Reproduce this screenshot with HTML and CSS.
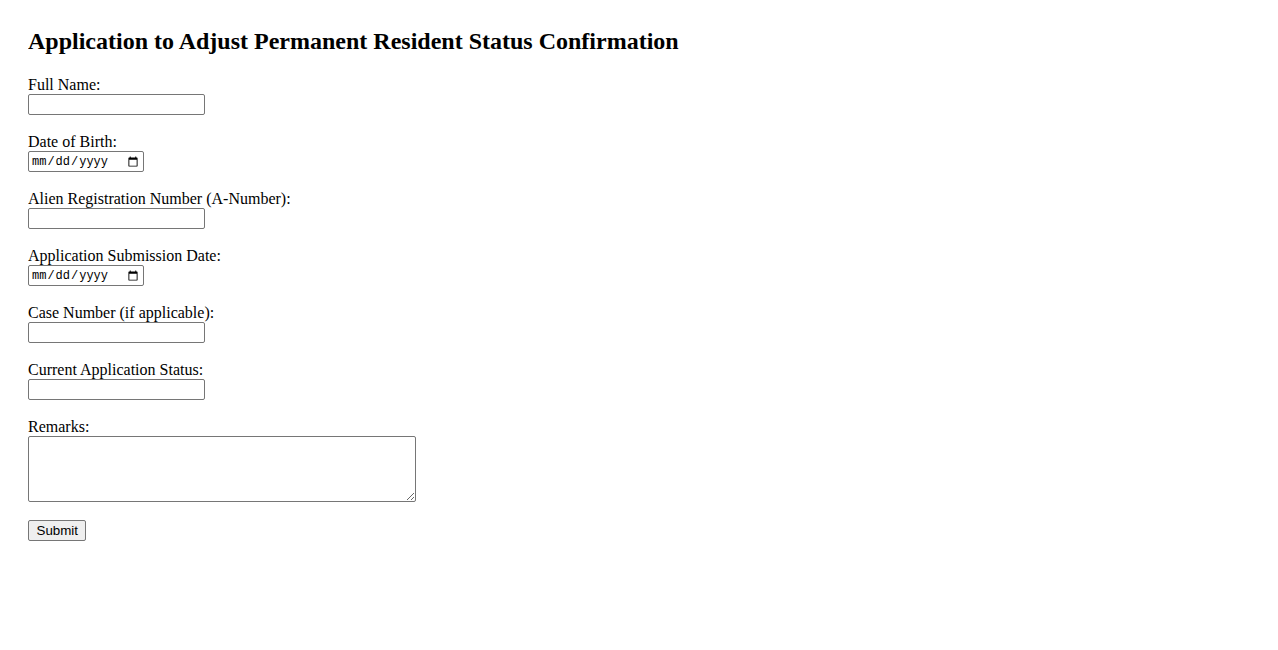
FILE: index.html
```html
<!DOCTYPE html>
<html lang="en">
<head>
    <meta charset="UTF-8">
    <meta name="viewport" content="width=device-width, initial-scale=1.0">
    <title>Application to Adjust Permanent Resident Status Confirmation</title>
    <link rel="stylesheet" href="styles.css">
</head>
<body>
<h2>Application to Adjust Permanent Resident Status Confirmation</h2>
<form class="status-form">
    <div class="form-group">
        <label for="fullName">Full Name:</label>
        <input type="text" id="fullName" name="fullName">
    </div>
    <div class="form-group">
        <label for="dob">Date of Birth:</label>
        <input type="date" id="dob" name="dob">
    </div>
    <div class="form-group">
        <label for="aNumber">Alien Registration Number (A-Number):</label>
        <input type="text" id="aNumber" name="aNumber">
    </div>
    <div class="form-group">
        <label for="submissionDate">Application Submission Date:</label>
        <input type="date" id="submissionDate" name="submissionDate">
    </div>
    <div class="form-group">
        <label for="caseNumber">Case Number (if applicable):</label>
        <input type="text" id="caseNumber" name="caseNumber">
    </div>
    <div class="form-group">
        <label for="status">Current Application Status:</label>
        <input type="text" id="status" name="status">
    </div>
    <div class="form-group">
        <label for="remarks">Remarks:</label>
        <textarea id="remarks" name="remarks" rows="4" cols="50"></textarea>
    </div>
    <button type="submit">Submit</button>
</form>
</body>
</html>
```

FILE: styles.css
```css
body {
    font-family: "Liberation Serif", "Times New Roman", serif;
    font-size: 16px;
    color: #000;
    background: #fff;
    margin: 28px;
}
h2 {
    font-size: 24px;
    font-weight: bold;
    margin: 0 0 21px;
}
.form-group {
    margin-bottom: 18px;
}
.form-group label {
    display: block;
}
input[type="text"],
input[type="date"],
textarea {
    display: block;
    box-sizing: border-box;
    border: 1px solid #767676;
    border-radius: 2px;
    padding: 1px 2px;
    font-family: "Liberation Sans", Arial, sans-serif;
    font-size: 13.333px;
}
input[type="text"] {
    width: 177px;
    height: 21px;
}
input[type="date"] {
    width: 116px;
    height: 21px;
    font-family: "Liberation Mono", "Courier New", monospace;
    font-size: 12px;
}
textarea {
    width: 388px;
    height: 66px;
    resize: both;
}
button {
    font-family: "Liberation Sans", Arial, sans-serif;
    font-size: 13.333px;
    padding: 1px 7.5px;
    height: 21px;
    border: 1px solid #767676;
    border-radius: 2px;
    background: #efefef;
    color: #000;
}
```
